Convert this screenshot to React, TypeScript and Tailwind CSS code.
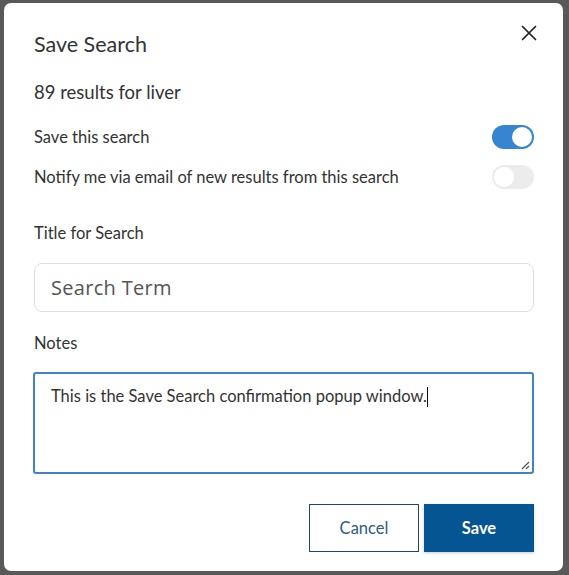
import React from "react";

export default function App() {
  return (
    <div className="w-[569px] h-[575px] bg-[#595959] overflow-hidden pt-[3px] pl-[4px]" style={{ fontFamily: "Lato, 'Liberation Sans', sans-serif" }}>
      <div className="w-[559px] h-[568px] bg-white rounded-[7px] pl-[30px] pr-[29px] flex flex-col">
        <div className="flex items-start justify-between pt-[27px]">
          <h2 className="text-[21.5px] leading-[28px] text-[#333]">Save Search</h2>
          <button className="mt-[-8px] mr-[-6px] w-[22px] h-[22px] flex items-center justify-center text-[#222]">
            <svg width="16" height="16" viewBox="0 0 16 16" fill="none" stroke="currentColor" strokeWidth="1.7" strokeLinecap="round">
              <path d="M1.5 1.5 L14.5 14.5 M14.5 1.5 L1.5 14.5" />
            </svg>
          </button>
        </div>
        <p className="mt-[22px] text-[18.5px] leading-[24px] text-[#333]">89 results for liver</p>
        <div className="mt-[21px] flex items-center justify-between h-[24px]">
          <span className="text-[16.5px] text-[#333]">Save this search</span>
          <span className="w-[42px] h-[24px] rounded-full bg-[#3585d0] flex items-center justify-end px-[2px]">
            <span className="w-[20px] h-[20px] rounded-full bg-white" />
          </span>
        </div>
        <div className="mt-[16px] flex items-center justify-between h-[24px]">
          <span className="text-[16.5px] text-[#333]">Notify me via email of new results from this search</span>
          <span className="w-[42px] h-[24px] rounded-full bg-[#ececec] flex items-center justify-start px-[2px]">
            <span className="w-[20px] h-[20px] rounded-full bg-white" />
          </span>
        </div>
        <label className="mt-[32px] text-[16.5px] leading-[24px] text-[#333]">Title for Search</label>
        <div className="mt-[18px] h-[49px] border border-[#dedede] rounded-[8px] flex items-center px-[16px]">
          <span className="text-[20px] text-[#555] tracking-[0.3px]" style={{ fontFamily: "'Open Sans', 'Noto Sans', sans-serif" }}>Search Term</span>
        </div>
        <label className="mt-[19px] text-[16.5px] leading-[24px] text-[#333]">Notes</label>
        <div className="mt-[17px] -ml-[1px] h-[102px] border-2 border-[#4383c4] rounded-[3px] relative px-[16px] pt-[10px]">
          <span className="text-[16.5px] leading-[24px] text-[#333]">This is the Save Search confirmation popup window.</span>
          <span className="inline-block w-[1px] h-[20px] bg-[#111] align-middle -mt-[2px]" />
          <svg className="absolute right-[2px] bottom-[2px]" width="10" height="10" viewBox="0 0 10 10" stroke="#555" strokeWidth="1.2">
            <path d="M9 2 L2 9 M9 6 L6 9" />
          </svg>
        </div>
        <div className="mt-[30px] flex justify-end gap-[5px]">
          <button className="w-[110px] h-[48px] border border-[#1b4a6d] text-[#2c5c86] text-[16.5px]">Cancel</button>
          <button className="w-[110px] h-[48px] bg-[#055592] text-white font-bold text-[16.5px] shadow-[0_1px_3px_rgba(0,0,0,0.2)]">Save</button>
        </div>
      </div>
    </div>
  );
}
